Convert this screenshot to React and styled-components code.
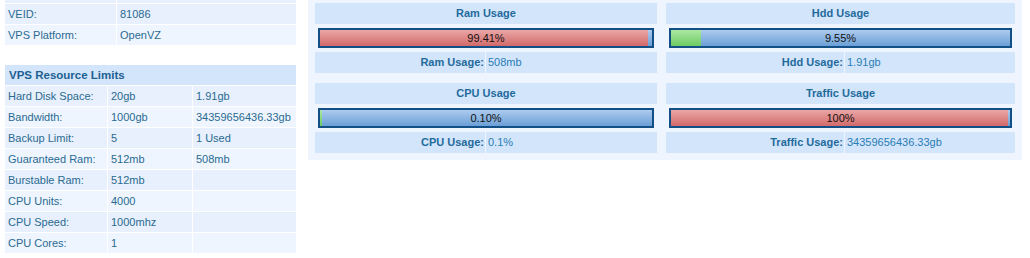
import React from "react";
import styled, { createGlobalStyle } from "styled-components";

const GlobalStyle = createGlobalStyle`
  body {
    margin: 0;
    background: #ffffff;
    font-family: "Liberation Sans", Arial, sans-serif;
    font-size: 11px;
  }
`;

const Page = styled.div`
  display: flex;
  align-items: flex-start;
  gap: 12px;
  padding-left: 5px;
`;

const LeftColumn = styled.div`
  width: 291px;
  display: flex;
  flex-direction: column;
  gap: 20px;
`;

const InfoTable = styled.div`
  display: grid;
  grid-template-columns: ${(p) => p.cols};
  gap: 1px;
`;

const Cell = styled.div`
  height: ${(p) => p.h || 20}px;
  line-height: ${(p) => p.h || 20}px;
  padding-left: 3px;
  background: ${(p) => (p.alt ? "#eef5fe" : "#e7f0fc")};
  color: #2a6a92;
  white-space: nowrap;
  overflow: hidden;
`;

const TableHeader = styled.div`
  grid-column: 1 / -1;
  height: 20px;
  line-height: 20px;
  padding-left: 4px;
  background: #d3e5fb;
  color: #1d6192;
  font-weight: bold;
  font-size: 11.5px;
`;

const UsagePanel = styled.div`
  width: 700px;
  padding: 3px 7px 7px;
  background: #eef5fe;
  display: grid;
  grid-template-columns: 342px 349px;
  column-gap: 9px;
  row-gap: 10px;
`;

const UsageCard = styled.div`
  display: flex;
  flex-direction: column;
  gap: 1px;
`;

const CardTitle = styled.div`
  height: 21px;
  line-height: 21px;
  text-align: center;
  background: #d3e5fb;
  color: #1f6b9c;
  font-weight: bold;
`;

const BarRow = styled.div`
  padding: 3px;
`;

const Bar = styled.div`
  position: relative;
  height: 16px;
  border: 2px solid #124f86;
  background: linear-gradient(#adcbee, #6b9fd6);
`;

const BarFill = styled.div`
  height: 100%;
  background: ${(p) =>
    p.high
      ? "linear-gradient(#eaa6a6, #d26a6a)"
      : "linear-gradient(#abe8a3, #6ecb62)"};
`;

const BarLabel = styled.div`
  position: absolute;
  inset: 0;
  line-height: 16px;
  text-align: center;
  color: #111111;
`;

const CardFooter = styled.div`
  display: grid;
  grid-template-columns: ${(p) => p.split}px 1fr;
  gap: 1px;
`;

const FooterLabel = styled.div`
  height: 21px;
  line-height: 21px;
  text-align: right;
  padding-right: 1px;
  background: #d3e5fb;
  color: #1f6b9c;
  font-weight: bold;
`;

const FooterValue = styled.div`
  height: 21px;
  line-height: 21px;
  padding-left: 2px;
  background: #d3e5fb;
  color: #2a7db5;
`;

const limits = [
  ["Hard Disk Space:", "20gb", "1.91gb"],
  ["Bandwidth:", "1000gb", "34359656436.33gb"],
  ["Backup Limit:", "5", "1 Used"],
  ["Guaranteed Ram:", "512mb", "508mb"],
  ["Burstable Ram:", "512mb", ""],
  ["CPU Units:", "4000", ""],
  ["CPU Speed:", "1000mhz", ""],
  ["CPU Cores:", "1", ""],
];

const usages = [
  { title: "Ram Usage", pct: 99.41, text: "99.41%", value: "508mb", split: 170 },
  { title: "Hdd Usage", pct: 9.55, text: "9.55%", value: "1.91gb", split: 178 },
  { title: "CPU Usage", pct: 0.1, text: "0.10%", value: "0.1%", split: 170 },
  { title: "Traffic Usage", pct: 100, text: "100%", value: "34359656436.33gb", split: 178 },
];

function UsageBlock({ title, pct, text, value, split }) {
  return (
    <UsageCard>
      <CardTitle>{title}</CardTitle>
      <BarRow>
        <Bar>
          <BarFill
            high={pct >= 90}
            style={{ width: `max(2px, calc(${pct}% - 2px))` }}
          />
          <BarLabel>{text}</BarLabel>
        </Bar>
      </BarRow>
      <CardFooter split={split}>
        <FooterLabel>{title}:</FooterLabel>
        <FooterValue>{value}</FooterValue>
      </CardFooter>
    </UsageCard>
  );
}

export default function App() {
  return (
    <>
      <GlobalStyle />
      <Page>
        <LeftColumn>
          <InfoTable cols="111px 1fr">
            <Cell h={3} />
            <Cell h={3} />
            <Cell>VEID:</Cell>
            <Cell>81086</Cell>
            <Cell alt>VPS Platform:</Cell>
            <Cell alt>OpenVZ</Cell>
          </InfoTable>
          <InfoTable cols="102px 84px 1fr">
            <TableHeader>VPS Resource Limits</TableHeader>
            {limits.map((row, i) =>
              row.map((v, j) => (
                <Cell key={`${i}-${j}`} alt={i % 2 === 1}>
                  {v}
                </Cell>
              ))
            )}
          </InfoTable>
        </LeftColumn>
        <UsagePanel>
          {usages.map((u) => (
            <UsageBlock key={u.title} {...u} />
          ))}
        </UsagePanel>
      </Page>
    </>
  );
}
